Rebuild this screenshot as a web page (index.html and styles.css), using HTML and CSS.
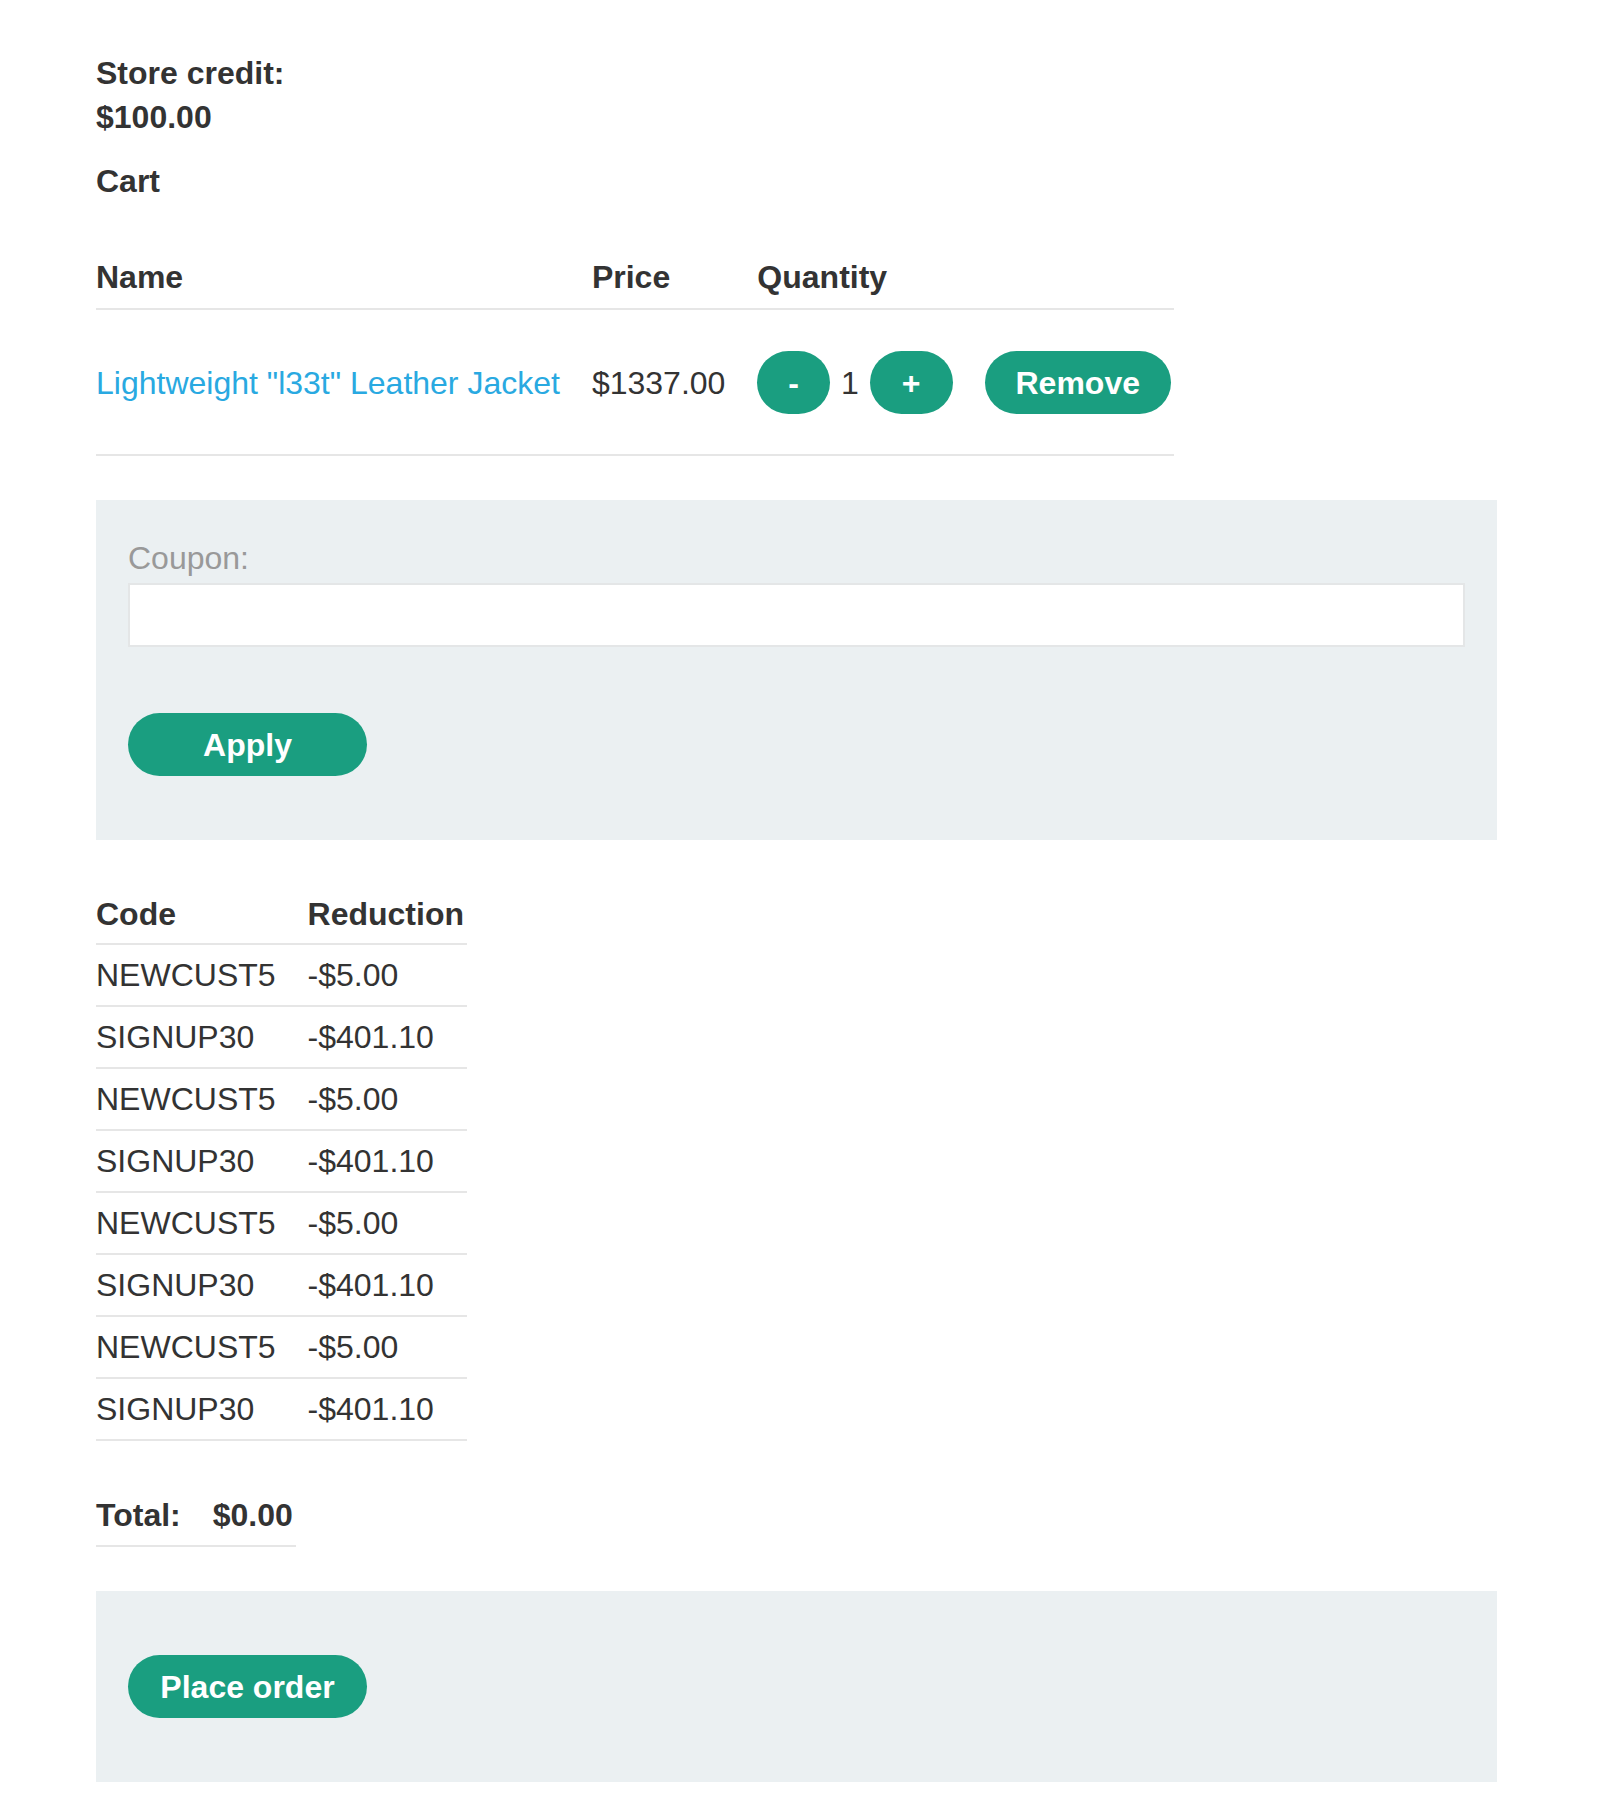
FILE: index.html
```html
<!DOCTYPE html>
<html>
<head>
  <link rel="stylesheet" href="styles.css">
</head>
<body>
  <div class="page">
    <p class="credit">Store credit:<br>$100.00</p>

    <h2 class="title">Cart</h2>

    <table class="cart-table">
      <thead>
        <tr>
          <th>Name</th>
          <th>Price</th>
          <th>Quantity</th>
          <th></th>
        </tr>
      </thead>
      <tbody>
        <tr>
          <td><a href="#" class="product-link">Lightweight "l33t" Leather Jacket</a></td>
          <td>$1337.00</td>
          <td>
            <div class="qty">
              <button class="btn">-</button>
              <span>1</span>
              <button class="btn">+</button>
            </div>
          </td>
          <td><button class="btn">Remove</button></td>
        </tr>
      </tbody>
    </table>

    <form class="panel coupon-form">
      <label for="coupon">Coupon:</label>
      <input type="text" id="coupon">
      <button type="button" class="btn btn-wide">Apply</button>
    </form>

    <table class="list-table">
      <thead>
        <tr>
          <th>Code</th>
          <th>Reduction</th>
        </tr>
      </thead>
      <tbody>
        <tr><td>NEWCUST5</td><td>-$5.00</td></tr>
        <tr><td>SIGNUP30</td><td>-$401.10</td></tr>
        <tr><td>NEWCUST5</td><td>-$5.00</td></tr>
        <tr><td>SIGNUP30</td><td>-$401.10</td></tr>
        <tr><td>NEWCUST5</td><td>-$5.00</td></tr>
        <tr><td>SIGNUP30</td><td>-$401.10</td></tr>
        <tr><td>NEWCUST5</td><td>-$5.00</td></tr>
        <tr><td>SIGNUP30</td><td>-$401.10</td></tr>
      </tbody>
    </table>

    <table class="list-table total-table">
      <tbody>
        <tr>
          <th>Total:</th>
          <th>$0.00</th>
        </tr>
      </tbody>
    </table>

    <form class="panel order-form">
      <button type="button" class="btn btn-wide">Place order</button>
    </form>
  </div>
</body>
</html>
```

FILE: styles.css
```css
body {
  margin: 0;
  font-family: "Liberation Sans", Arial, Helvetica, sans-serif;
  font-size: 32px;
  line-height: 48px;
  color: #333;
  background: #fff;
}
.page {
  width: 1401px;
  margin-left: 96px;
  padding-top: 51px;
}
.credit {
  margin: 0;
  font-weight: bold;
  line-height: 44px;
}
.title {
  margin: 18px 0 0 0;
  font-size: 32px;
  line-height: 48px;
}
table {
  border-collapse: collapse;
  border-spacing: 0;
}
th {
  text-align: left;
  font-weight: bold;
}
th, td {
  padding: 0 32px 0 0;
  white-space: nowrap;
}
th:last-child, td:last-child {
  padding-right: 3px;
}
.cart-table {
  margin-top: 42px;
}
.cart-table thead th {
  padding-top: 6px;
  padding-bottom: 7px;
  border-bottom: 2px solid #e6e6e6;
}
.cart-table tbody td {
  padding-top: 41px;
  padding-bottom: 40px;
  vertical-align: middle;
  border-bottom: 2px solid #e6e6e6;
}
.product-link {
  color: #29a9e1;
  text-decoration: none;
}
.qty {
  display: flex;
  align-items: center;
  gap: 11px;
}
.btn {
  font-family: inherit;
  font-size: 32px;
  font-weight: bold;
  line-height: 48px;
  padding: 7.5px 31px;
  border: none;
  border-radius: 32px;
  background-color: #1a9e80;
  color: #fff;
  cursor: pointer;
}
.qty .btn:last-child {
  padding: 7.5px 32px;
}
.btn-wide {
  min-width: 239px;
  display: block;
  margin: 32px 0;
}
.panel {
  margin: 44px 0 0 0;
  padding: 32px;
  background-color: #ebf0f2;
}
.coupon-form label {
  display: block;
  padding-top: 2px;
  color: #999;
}
.coupon-form input {
  display: block;
  box-sizing: border-box;
  width: 100%;
  height: 64px;
  margin: 1px 0 0 0;
  padding: 0 16px;
  border: 2px solid #e4e6e7;
  background: #fff;
  font-family: inherit;
  font-size: 32px;
}
.coupon-form .btn-wide {
  margin-top: 66px;
}
.list-table {
  margin-top: 44px;
}
.list-table th, .list-table td {
  padding-top: 6px;
  padding-bottom: 6px;
  border-bottom: 2px solid #e6e6e6;
}
.list-table thead th {
  padding-bottom: 5px;
}
.order-form {
  margin-top: 44px;
}
```
